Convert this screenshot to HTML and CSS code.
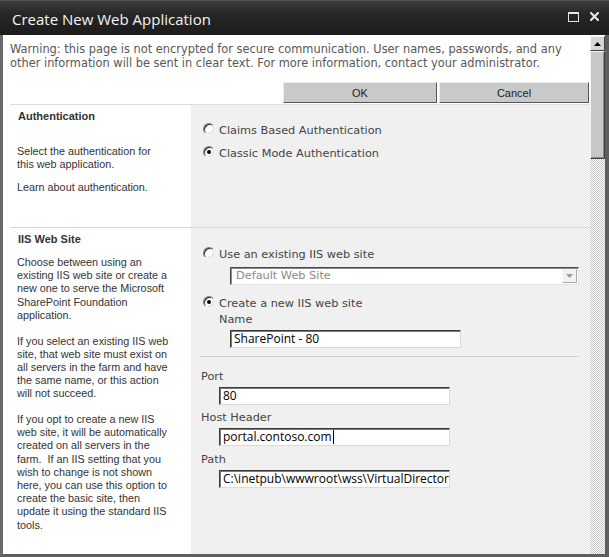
FILE: index.html
```html
<!DOCTYPE html>
<html>
<head>
<meta charset="utf-8">
<title>Create New Web Application</title>
<link rel="stylesheet" href="styles.css">
</head>
<body>
<div class="window">
  <div class="titlebar">
    <span class="title">Create New Web Application</span>
    <span class="controls">
      <svg class="ic-max" width="11" height="10" viewBox="0 0 11 10"><rect x="0.5" y="0.5" width="10" height="9" fill="none" stroke="#e6e6e6" stroke-width="1"/><rect x="0" y="0" width="11" height="2" fill="#e6e6e6"/></svg>
      <svg class="ic-close" width="9" height="9" viewBox="0 0 9 9"><path d="M1 1 L8 8 M8 1 L1 8" stroke="#e6e6e6" stroke-width="2.2" stroke-linecap="square"/></svg>
    </span>
  </div>
  <div class="body">
    <div class="content">
      <p class="warning">Warning: this page is not encrypted for secure communication. User names, passwords, and any<br>other information will be sent in clear text. For more information, contact your administrator.</p>
      <div class="buttons">
        <button class="btn btn-ok">OK</button>
        <button class="btn btn-cancel">Cancel</button>
      </div>
      <div class="sections">
        <div class="section">
          <div class="desc auth-desc">
            <div class="sec-title">Authentication</div>
            <p class="first">Select the authentication for<br>this web application.</p>
            <p class="learn">Learn about authentication.</p>
          </div>
          <div class="fields auth-fields">
            <div class="radio-row"><span class="radio"></span><span>Claims Based Authentication</span></div>
            <div class="radio-row second"><span class="radio checked"></span><span>Classic Mode Authentication</span></div>
          </div>
        </div>
        <div class="section iis">
          <div class="desc iis-desc">
            <div class="sec-title">IIS Web Site</div>
            <p class="first">Choose between using an<br>existing IIS web site or create a<br>new one to serve the Microsoft<br>SharePoint Foundation<br>application.</p>
            <p>If you select an existing IIS web<br>site, that web site must exist on<br>all servers in the farm and have<br>the same name, or this action<br>will not succeed.</p>
            <p>If you opt to create a new IIS<br>web site, it will be automatically<br>created on all servers in the<br>farm.&nbsp; If an IIS setting that you<br>wish to change is not shown<br>here, you can use this option to<br>create the basic site, then<br>update it using the standard IIS<br>tools.</p>
          </div>
          <div class="fields iis-fields">
            <div class="radio-row"><span class="radio"></span><span>Use an existing IIS web site</span></div>
            <div class="select"><span class="select-text">Default Web Site</span><span class="select-btn"><svg width="7" height="4" viewBox="0 0 7 4"><path d="M0 0 H7 L3.5 4 Z" fill="#9a9a9a"/></svg></span></div>
            <div class="radio-row create"><span class="radio checked"></span><span>Create a new IIS web site</span></div>
            <div class="label name-label">Name</div>
            <div class="textbox name-box">SharePoint - 80</div>
            <div class="divider"></div>
            <div class="label plain-label port-label">Port</div>
            <div class="textbox plain-box">80</div>
            <div class="label plain-label">Host Header</div>
            <div class="textbox plain-box">portal.contoso.com<span class="caret"></span></div>
            <div class="label plain-label path-label">Path</div>
            <div class="textbox plain-box">C:\inetpub\wwwroot\wss\VirtualDirector</div>
          </div>
        </div>
      </div>
    </div>
    <div class="scrollbar">
      <div class="sb-up"><svg width="7" height="4" viewBox="0 0 7 4"><path d="M3.5 0 L7 4 H0 Z" fill="#000"/></svg></div>
      <div class="sb-thumb"></div>
      <div class="sb-track"></div>
    </div>
  </div>
</div>
</body>
</html>
```

FILE: styles.css
```css
html, body {
  margin: 0;
  padding: 0;
  background: #2a2a2a;
}

.window {
  width: 609px;
  height: 557px;
  display: flex;
  flex-direction: column;
  overflow: hidden;
}

.titlebar {
  height: 35px;
  flex: none;
  background: linear-gradient(#3d3d3d, #262626 40%, #1c1c1c);
  border-top: 1px solid #555;
  box-sizing: border-box;
  display: flex;
  align-items: center;
  justify-content: space-between;
  padding: 0 10px 0 12px;
}

.title {
  font-family: "Open Sans", "DejaVu Sans", sans-serif;
  font-size: 15px;
  color: #f4f4f4;
  margin-top: 1px;
}

.controls {
  display: flex;
  align-items: center;
  gap: 11px;
  margin-top: -3px;
}

.body {
  flex: 1;
  display: flex;
  min-height: 0;
  border-left: 3px solid #6a6a6a;
  border-right: 4px solid #5e5e5e;
  border-bottom: 3px solid #5e5e5e;
  box-shadow: inset 0 -1px 0 #bdbdbd;
}

.content {
  flex: 1;
  background: #fff;
  overflow: hidden;
  min-width: 0;
}

.warning {
  margin: 0;
  padding: 7px 10px 0 7px;
  font-family: "DejaVu Sans", Verdana, sans-serif;
  font-size: 11.4px;
  line-height: 14px;
  color: #585858;
  white-space: nowrap;
}

.buttons {
  display: flex;
  justify-content: flex-end;
  gap: 2px;
  margin: 12px 1px 1px 0;
}

.btn {
  height: 21px;
  box-sizing: border-box;
  background: #c9c9c9;
  border: 1px solid;
  border-color: #ececec #555 #555 #ececec;
  font-family: "Liberation Sans", Arial, sans-serif;
  font-size: 11px;
  color: #222;
  padding: 0;
}

.btn-ok { width: 154px; }
.btn-cancel { width: 150px; }

.sections {
  margin-left: 7px;
  border-top: 1px solid #dedede;
}

.section {
  display: grid;
  grid-template-columns: 181px 1fr;
  border-bottom: 1px solid #d6d6d6;
}

.section.iis {
  border-bottom: none;
}

.desc {
  padding: 5px 7px 0 7px;
  font-family: "Liberation Sans", Arial, sans-serif;
  font-size: 10.8px;
  line-height: 13.2px;
  color: #333;
  white-space: nowrap;
}

.sec-title {
  font-weight: bold;
  font-size: 11px;
  line-height: 13px;
  color: #333;
  padding-left: 1px;
}

.desc p {
  margin: 12.5px 0 0 0;
}

.auth-desc p.first { margin-top: 22px; }
.auth-desc p.learn { margin-top: 10px; }
.iis-desc p.first { margin-top: 10px; }

.iis-desc {
  height: 340px;
}

.fields {
  background: #f0f0f0;
  padding: 18px 10px 0 12px;
  font-family: "DejaVu Sans", Verdana, sans-serif;
  font-size: 11.3px;
  color: #444;
}

.auth-fields {
  height: 104px;
}

.iis-fields {
  padding-top: 19px;
  height: 330px;
}

.radio-row {
  display: flex;
  align-items: center;
  gap: 4px;
  height: 16px;
  line-height: 16px;
}

.radio-row.second { margin-top: 7px; }
.radio-row.create { margin-top: 11px; }

.radio {
  width: 12px;
  height: 12px;
  box-sizing: border-box;
  border-radius: 50%;
  border: 1px solid;
  border-color: #7c7c7c #f4f4f4 #f4f4f4 #7c7c7c;
  background: #fff;
  box-shadow: inset 1px 1px 0 #2c2c2c, inset -1px -1px 0 #d8d8d8;
  position: relative;
  margin-top: -5px;
  flex: none;
}

.radio.checked::after {
  content: "";
  position: absolute;
  left: 3px;
  top: 3px;
  width: 4px;
  height: 4px;
  border-radius: 50%;
  background: #000;
}

.select {
  margin: 4px 0 0 27px;
  width: 349px;
  height: 18px;
  box-sizing: border-box;
  background: #fff;
  border: 1px solid;
  border-color: #4a4a4a #e2e2e2 #e2e2e2 #4a4a4a;
  box-shadow: inset 1px 1px 0 #8a8a8a;
  display: flex;
  align-items: center;
  justify-content: space-between;
}

.select-text {
  color: #8a8a8a;
  padding-left: 5px;
  line-height: 16px;
}

.select-btn {
  width: 15px;
  height: 14px;
  box-sizing: border-box;
  margin-right: 1px;
  background: #f2f2f2;
  border: 1px solid;
  border-color: #f8f8f8 #a8a8a8 #a8a8a8 #f8f8f8;
  display: flex;
  align-items: center;
  justify-content: center;
}

.label {
  line-height: 16px;
}

.name-label {
  margin-left: 16px;
}

.textbox {
  margin-top: 2px;
  height: 18px;
  box-sizing: border-box;
  background: #fff;
  border: 1px solid;
  border-color: #3a3a3a #dadada #dadada #3a3a3a;
  box-shadow: inset 1px 1px 0 #7a7a7a;
  font-family: "Open Sans", "DejaVu Sans", sans-serif;
  font-size: 12px;
  line-height: 16px;
  color: #000;
  padding-left: 3px;
  white-space: nowrap;
  overflow: hidden;
}

.name-box {
  margin-left: 27px;
  width: 231px;
}

.divider {
  margin: 8px 0 0 -3px;
  width: 379px;
  border-top: 1px solid #d2d2d2;
}

.plain-label {
  margin-left: -2px;
  margin-top: 5px;
}

.port-label { margin-top: 12px; }
.path-label { margin-top: 6px; }

.plain-box {
  margin-left: 16px;
  width: 231px;
}

.caret {
  display: inline-block;
  width: 1px;
  height: 14px;
  background: #000;
  vertical-align: -3px;
  margin-left: 1px;
}

.scrollbar {
  width: 15px;
  flex: none;
  display: flex;
  flex-direction: column;
  background: #fff;
}

.sb-up {
  height: 15px;
  margin-top: 1px;
  box-sizing: border-box;
  background: #d6d6d6;
  border: 1px solid;
  border-color: #f6f6f6 #404040 #404040 #f6f6f6;
  display: flex;
  align-items: center;
  justify-content: center;
}

.sb-thumb {
  height: 108px;
  box-sizing: border-box;
  background: #c8c8c8;
  border: 1px solid;
  border-color: #f4f4f4 #404040 #404040 #f4f4f4;
  box-shadow: inset -1px -1px 0 #8a8a8a;
}

.sb-track {
  flex: 1;
  background: repeating-conic-gradient(#c4c4c4 0 25%, #fff 0 50%) 0 0 / 2px 2px;
}
```
